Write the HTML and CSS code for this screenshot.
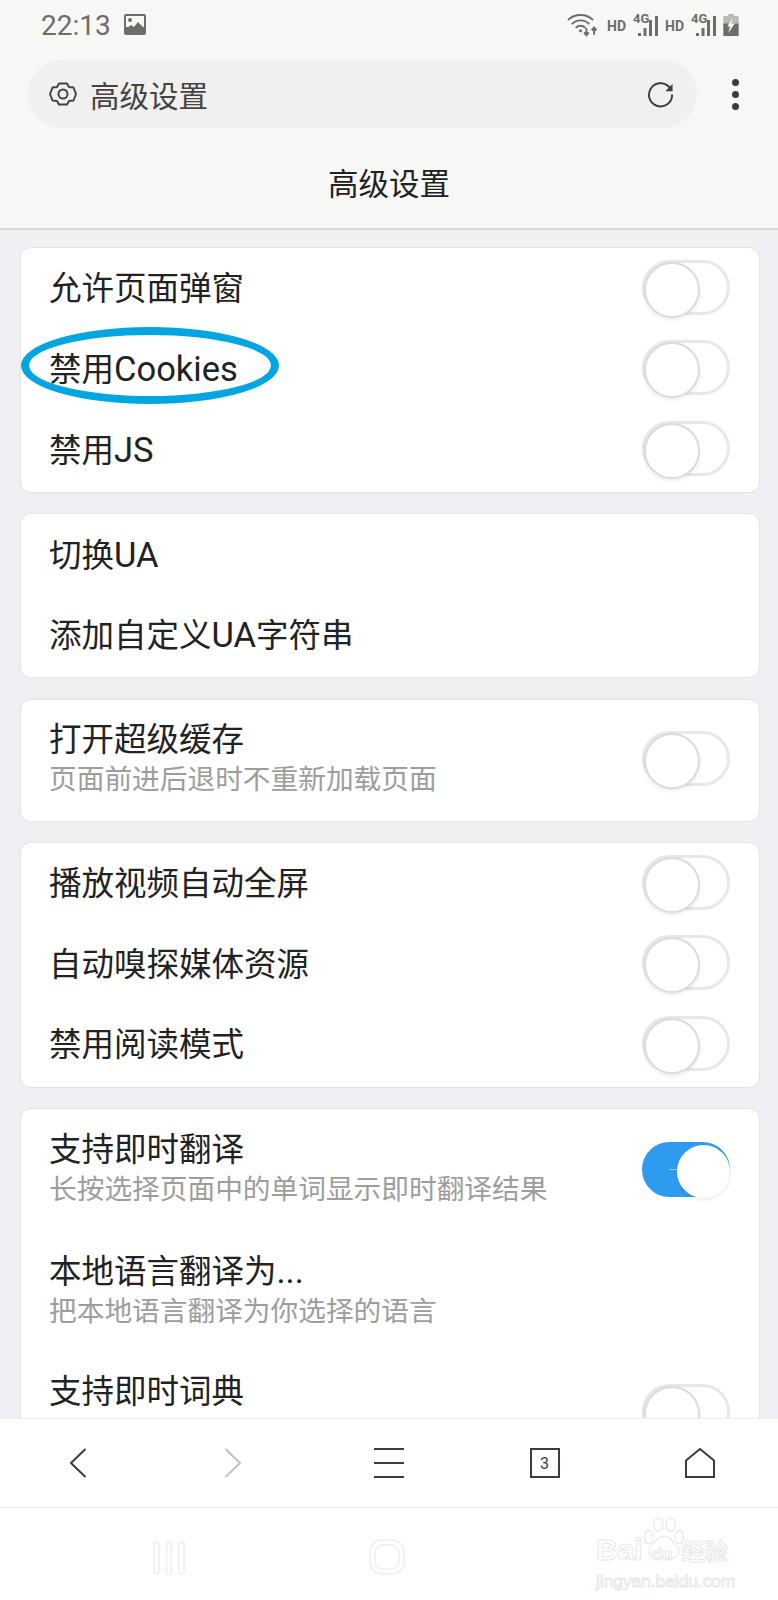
FILE: index.html
```html
<!DOCTYPE html>
<html lang="zh-CN">
<head>
    <meta charset="UTF-8" />
    <meta name="viewport" content="width=device-width, initial-scale=1" />
    <title>高级设置</title>
    <link rel="stylesheet" href="styles.css">
</head>
<body>
<div class="phone">
    <header class="top">
        <div class="status">
            <span class="time">22:13</span>
            <svg class="pic" viewBox="0 0 22 22"><rect x="0" y="0" width="22" height="21" rx="2" fill="#6d6d69"/><rect x="2" y="2" width="18" height="11" fill="#f7f7f5"/><circle cx="6" cy="6" r="2" fill="#6d6d69"/><path d="M2 15l5-4 3 2 4-5 6 6v2H2z" fill="#6d6d69"/></svg>
            <span class="status-right">
                <svg class="wifi" viewBox="0 0 32 24" fill="none" stroke="#6d6d69" stroke-width="2"><path d="M1 7C8 0 20 0 27 7"/><path d="M5 11c5-5 13-5 18 0"/><path d="M9 15c3-3 7-3 10 0"/><circle cx="14" cy="18" r="1.600" fill="#6d6d69" stroke="none"/><path d="M20 15v7M17.500 19.500l2.500 3 2.500-3M28 22v-7M25.500 17.500l2.500-3 2.500 3"/></svg>
                <span class="hd">HD</span>
                <span class="sig"><span class="g4">4G</span><svg viewBox="0 0 20 20" fill="#6d6d69"><rect x="0" y="17" width="3" height="3"/><rect x="5.500" y="12" width="3" height="8"/><rect x="11" y="4" width="3" height="16"/><rect x="17" y="0" width="3" height="20"/></svg></span>
                <span class="hd">HD</span>
                <span class="sig"><span class="g4">4G</span><svg viewBox="0 0 20 20" fill="#6d6d69"><rect x="0" y="17" width="3" height="3"/><rect x="5.500" y="12" width="3" height="8"/><rect x="11" y="4" width="3" height="16"/><rect x="17" y="0" width="3" height="20"/></svg></span>
                <svg class="batt" viewBox="0 0 16 24"><rect x="5" y="0" width="6" height="3" fill="#b9b9b5"/><rect x="0" y="2" width="16" height="10" fill="#b9b9b5"/><rect x="0" y="10" width="16" height="13" fill="#6d6d69"/><path d="M10 4l-6 9h3l-2 7 7-10H8z" fill="#f7f7f5"/></svg>
            </span>
        </div>
        <div class="address">
            <div class="pill">
                <svg class="gear" viewBox="0 0 28 28" fill="none" stroke="#444" stroke-width="2" stroke-linejoin="round"><path d="M10 3.500h8l2 3.500 4.500.5 2.500 6.500-2.500 6.500-4.500.5-2 3.500h-8l-2-3.500-4.500-.5L1 14l2.500-6.500L8 7z"/><circle cx="14" cy="14" r="4.500"/></svg>
                <span class="pill-text">高级设置</span>
                <svg class="reload" viewBox="0 0 28 28" fill="none" stroke="#3c3c3c" stroke-width="2"><path d="M24.500 8.500A12 12 0 1 0 26 14"/><path d="M26.500 3v7.500H19z" stroke="none" fill="#3c3c3c"/></svg>
            </div>
            <div class="dots"><i></i><i></i><i></i></div>
        </div>
        <h1 class="title">高级设置</h1>
    </header>

    <main class="content">
        <section class="card">
            <div class="row"><span class="label">允许页面弹窗</span><span class="switch"></span></div>
            <div class="row"><span class="label">禁用<span class="en">Cookies</span></span><span class="switch"></span></div>
            <div class="row"><span class="label">禁用<span class="en">JS</span></span><span class="switch"></span></div>
            <span class="circle"></span>
        </section>
        <section class="card">
            <div class="row"><span class="label">切换<span class="en">UA</span></span></div>
            <div class="row"><span class="label">添加自定义<span class="en">UA</span>字符串</span></div>
        </section>
        <section class="card">
            <div class="row tall"><div><div class="label">打开超级缓存</div><div class="sub">页面前进后退时不重新加载页面</div></div><span class="switch"></span></div>
        </section>
        <section class="card">
            <div class="row"><span class="label">播放视频自动全屏</span><span class="switch"></span></div>
            <div class="row"><span class="label">自动嗅探媒体资源</span><span class="switch"></span></div>
            <div class="row"><span class="label">禁用阅读模式</span><span class="switch"></span></div>
        </section>
        <section class="card long">
            <div class="row tall"><div><div class="label">支持即时翻译</div><div class="sub">长按选择页面中的单词显示即时翻译结果</div></div><span class="switch on"></span></div>
            <div class="row tall"><div><div class="label">本地语言翻译为<span class="en">...</span></div><div class="sub">把本地语言翻译为你选择的语言</div></div></div>
            <div class="row tall"><div class="label only">支持即时词典</div><span class="switch"></span></div>
        </section>
    </main>

    <nav class="toolbar">
        <svg viewBox="0 0 30 30" fill="none" stroke="#3c3c3c" stroke-width="2"><path d="M22.500 1L8 15l14.500 14"/></svg>
        <svg viewBox="0 0 30 30" fill="none" stroke="#c4c1bc" stroke-width="2"><path d="M7.500 1L22 15 7.500 29"/></svg>
        <svg viewBox="0 0 30 30" fill="none" stroke="#3c3c3c" stroke-width="2"><path d="M0 1h30M0 15h30M0 29h30"/></svg>
        <span class="tabs">3</span>
        <svg viewBox="0 0 30 30" fill="none" stroke="#3c3c3c" stroke-width="2"><path d="M1 29V12.500L15 1l14 11.500V29z"/></svg>
    </nav>

    <footer class="gesture">
        <svg class="recent" viewBox="0 0 32 34" fill="none" stroke="#f1f1f1" stroke-width="2"><rect x="1" y="1" width="5" height="32" rx="2.500"/><rect x="13.500" y="1" width="5" height="32" rx="2.500"/><rect x="26" y="1" width="5" height="32" rx="2.500"/></svg>
        <svg class="home" viewBox="0 0 36 36" fill="none" stroke="#f1f1f1" stroke-width="2"><rect x="1" y="1" width="34" height="34" rx="12"/><rect x="6" y="6" width="24" height="24" rx="8"/></svg>
        <div class="mark">
            <svg class="paw" viewBox="0 0 44 46" fill="none" stroke="#e8e8e8" stroke-width="1.200"><ellipse cx="6" cy="21" rx="4.500" ry="7"/><ellipse cx="16" cy="8" rx="5" ry="7"/><ellipse cx="29" cy="8" rx="5" ry="7"/><ellipse cx="38" cy="21" rx="4.500" ry="7"/><path d="M22 20c-7 0-9 6-14 11-4 5 0 12 6 12 3 0 5-1 8-1s5 1 8 1c6 0 10-7 6-12-5-5-7-11-14-11z"/></svg>
            <div class="mark-top"><span>Bai</span><span class="mark-du">du</span><span class="mark-cn">经验</span></div>
            <div class="mark-url">jingyan.baidu.com</div>
        </div>
    </footer>
</div>
</body>
</html>
```

FILE: styles.css
```css
* {
    box-sizing: border-box;
}
body {
    margin: 0;
    background: #fff;
    font-family: Roboto, "Noto Sans CJK SC", sans-serif;
    color: #222;
}
.phone {
    width: 778px;
    height: 1600px;
    display: flex;
    flex-direction: column;
    overflow: hidden;
}

/* top area */
.top {
    height: 230px;
    flex: none;
    background: #f7f7f5;
    border-bottom: 2px solid #d8d8d6;
}
.status {
    height: 50px;
    padding: 0 0 0 41px;
    display: flex;
    align-items: center;
}
.time {
    font-size: 28px;
    color: #6d6d69;
}
.pic {
    width: 22px;
    height: 22px;
    margin-left: 13px;
}
.status-right {
    margin-left: auto;
    margin-right: 39px;
    display: flex;
    align-items: center;
    gap: 7px;
}
.wifi {
    width: 31px;
    height: 24px;
    margin-right: 2px;
}
.hd {
    font-size: 14px;
    font-weight: 700;
    color: #6d6d69;
    margin-top: 2px;
}
.sig {
    position: relative;
    width: 25px;
    height: 24px;
}
.sig svg {
    position: absolute;
    left: 5px;
    top: 3px;
    width: 20px;
    height: 20px;
}
.g4 {
    position: absolute;
    left: 0;
    top: 0;
    font-size: 13px;
    line-height: 12px;
    font-weight: 700;
    color: #6d6d69;
}
.batt {
    width: 16px;
    height: 23px;
}
.address {
    height: 68px;
    margin-top: 10px;
    padding-left: 28px;
    display: flex;
    align-items: center;
}
.pill {
    width: 669px;
    height: 68px;
    border-radius: 34px;
    background: #f1f0ee;
    padding: 0 23px 0 21px;
    display: flex;
    align-items: center;
}
.gear {
    width: 28px;
    height: 28px;
}
.pill-text {
    margin-left: 13px;
    font-size: 29.500px;
    color: #444;
}
.reload {
    width: 27px;
    height: 27px;
    margin-left: auto;
}
.dots {
    margin-left: 35px;
    display: flex;
    flex-direction: column;
    gap: 5px;
}
.dots i {
    display: block;
    width: 7px;
    height: 7px;
    border-radius: 50%;
    background: #3c3c3c;
}
.title {
    margin: 0;
    height: 100px;
    padding-top: 8px;
    display: flex;
    align-items: center;
    justify-content: center;
    font-size: 30.500px;
    font-weight: 400;
    color: #222;
}

/* settings list */
.content {
    flex: 1;
    min-height: 0;
    overflow: hidden;
    background: #f0eff4;
    padding: 17px 18px 0 20px;
    display: flex;
    flex-direction: column;
    gap: 20.500px;
}
.card {
    position: relative;
    flex: none;
    background: #fff;
    border: 1px solid #e6e4de;
    border-radius: 11px;
    padding: 1px 0;
}
.row {
    height: 80.500px;
    padding: 0 29px 0 28px;
    display: flex;
    align-items: center;
    justify-content: space-between;
}
.row.tall {
    height: 119px;
    padding-bottom: 3px;
}
.long .row.tall {
    height: 121px;
}
.label {
    font-size: 32.500px;
    line-height: 42px;
    color: #222;
}
.label.only {
    align-self: flex-start;
    margin-top: 19px;
}
.en {
    font-size: 34.500px;
}
.sub {
    font-size: 27.700px;
    line-height: 38px;
    color: #9d9d9b;
}
.switch {
    position: relative;
    flex: none;
    width: 88px;
    height: 55px;
    margin-bottom: 4px;
    border: 3px solid #e9e8e4;
    border-radius: 28px;
    background: #fff;
}
.tall .switch {
    margin-bottom: 0;
}
.switch::after {
    content: "";
    position: absolute;
    left: -1px;
    top: -1px;
    width: 52px;
    height: 52px;
    border: 2px solid #dcdbd7;
    border-radius: 50%;
    background: #fff;
    box-shadow: 0 2px 4px rgba(0,0,0,0.08);
}
.switch.on {
    background: #2f9bee;
    border-color: #2f9bee;
}
.switch.on::before {
    content: "";
    position: absolute;
    left: 24px;
    top: 24px;
    width: 8px;
    height: 1px;
    background: rgba(255,255,255,0.5);
}
.switch.on::after {
    left: 32px;
    top: 0;
    width: 49px;
    height: 49px;
    border-color: #fff;
}

/* hand drawn ring around the Cookies row */
.circle {
    position: absolute;
    left: 0;
    top: 79px;
    width: 258px;
    height: 77px;
    border: 8px solid #00a6e2;
    border-radius: 50%;
}

/* bottom */
.toolbar {
    height: 90px;
    flex: none;
    background: #fff;
    border-top: 1px solid #efefef;
    border-bottom: 1px solid #efefef;
    display: grid;
    grid-template-columns: repeat(5, 1fr);
    align-items: center;
    justify-items: center;
}
.toolbar svg {
    width: 30px;
    height: 30px;
}
.tabs {
    width: 30px;
    height: 30px;
    border: 2px solid #3c3c3c;
    display: flex;
    align-items: center;
    justify-content: center;
    font-size: 16px;
    color: #3c3c3c;
}
.gesture {
    position: relative;
    height: 92px;
    flex: none;
    background: #fff;
}
.recent {
    position: absolute;
    left: 153px;
    top: 33px;
    width: 32px;
    height: 34px;
}
.home {
    position: absolute;
    left: 369px;
    top: 31px;
    width: 36px;
    height: 36px;
}
.mark {
    position: absolute;
    left: 596px;
    top: 9px;
    width: 142px;
    height: 66px;
    padding-top: 19px;
    color: #fff;
    -webkit-text-stroke: 1px #e8e8e8;
}
.mark-top {
    position: relative;
    display: flex;
    align-items: baseline;
    font-family: "Liberation Sans", sans-serif;
    font-size: 30px;
    line-height: 28px;
    font-weight: 700;
}
.mark-du {
    font-size: 17px;
    margin-left: 9px;
    width: 30px;
}
.mark-cn {
    font-size: 23px;
    font-family: "Noto Sans CJK SC", sans-serif;
}
.mark-url {
    position: relative;
    margin-top: 3px;
    font-family: "Liberation Sans", sans-serif;
    font-size: 17.300px;
    line-height: 18px;
    white-space: nowrap;
}
.paw {
    position: absolute;
    left: 47px;
    top: 0;
    width: 42px;
    height: 44px;
}
```
